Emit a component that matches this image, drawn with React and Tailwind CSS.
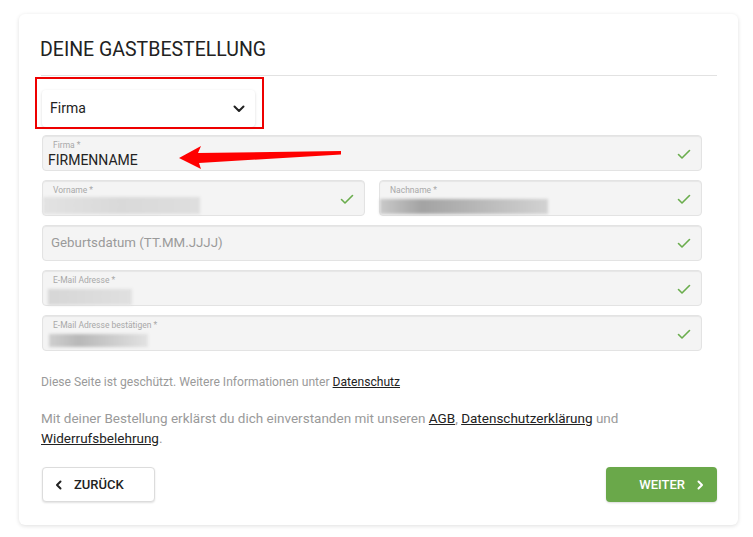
import React from "react";

const Check = () => (
  <svg width="14" height="11" viewBox="0 0 14 11" className="shrink-0">
    <polyline points="1.5,5.5 5,9 12.5,1.5" fill="none" stroke="#6aad4d" strokeWidth="1.6" strokeLinecap="round" strokeLinejoin="round" />
  </svg>
);

const fieldBase =
  "relative h-[36px] rounded-[4px] border border-[#e3e3e3] bg-[#f4f4f4] shadow-[inset_0_1px_1px_rgba(0,0,0,0.06)]";

function Blur({ className }) {
  return <div className={"blur-[1.5px] " + className} />;
}

function FilledField({ label, children, className = "" }) {
  return (
    <div className={fieldBase + " flex items-center " + className}>
      <div className="flex min-w-0 flex-1 flex-col self-stretch pt-[4px]">
        <div className="pl-[10px] text-[8.5px] leading-[11px] text-[#a8a8a8]">{label}</div>
        {children}
      </div>
      <div className="pr-[10px] pt-[2px]">
        <Check />
      </div>
    </div>
  );
}

export default function App() {
  return (
    <div className="relative min-h-[537px] w-[753px] bg-white font-['Roboto',sans-serif] text-[#222]">
      <div className="pl-[19px] pt-[14px]">
        <div className="w-[719px] rounded-[6px] bg-white px-[21px] pb-[23px] pl-[23px] pt-[23px] shadow-[0_1px_4px_rgba(0,0,0,0.13)]">
          <h1 className="-ml-[2px] text-[19.5px] font-normal leading-[26px] text-[#222]">
            DEINE GASTBESTELLUNG
          </h1>
          <div className="-ml-px mt-[12px] h-px bg-[#e2e2e2]" />

          <div className="mt-[14px] flex h-[37px] w-[213px] items-center justify-between rounded-[4px] bg-white px-[8px] shadow-[0_1px_3px_rgba(0,0,0,0.15)]">
            <span className="text-[14px] text-[#222]">Firma</span>
            <svg width="12" height="8" viewBox="0 0 12 8" className="mr-[2px]">
              <polyline points="1.5,1.5 6,6 10.5,1.5" fill="none" stroke="#222" strokeWidth="2" strokeLinecap="round" strokeLinejoin="round" />
            </svg>
          </div>

          <div className="mt-[8px] flex w-[660px] flex-col gap-[9px]">
            <FilledField label="Firma *">
              <div className="pl-[5px] pt-px text-[14px] leading-[16px] text-[#222]">FIRMENNAME</div>
            </FilledField>

            <div className="flex gap-[14px]">
              <FilledField label="Vorname *" className="h-[35px] w-[323px]">
                <Blur className="mt-px h-[17px] w-[157px] bg-gradient-to-r from-[#e2e2e2] via-[#d9d9d9] to-[#dedede]" />
              </FilledField>
              <FilledField label="Nachname *" className="h-[35px] flex-1">
                <Blur className="mt-[3px] h-[15px] w-[168px] bg-gradient-to-r from-[#c9c9c9] via-[#a3a3a3] via-25% to-[#d2d2d2]" />
              </FilledField>
            </div>

            <div className={fieldBase + " flex items-center"}>
              <span className="flex-1 pl-[8px] text-[13.3px] text-[#9a9a9a]">Geburtsdatum (TT.MM.JJJJ)</span>
              <div className="pr-[10px]">
                <Check />
              </div>
            </div>

            <FilledField label="E-Mail Adresse *" className="h-[35px]">
              <Blur className="ml-[5px] mt-[3px] h-[16px] w-[84px] bg-gradient-to-r from-[#d6d6d6] to-[#e0e0e0]" />
            </FilledField>

            <FilledField label="E-Mail Adresse bestätigen *" className="h-[35px]">
              <Blur className="ml-[6px] mt-[3px] h-[13px] w-[99px] bg-gradient-to-r from-[#cfcfcf] via-[#b8b8b8] via-30% to-[#e2e2e2]" />
            </FilledField>
          </div>

          <p className="-ml-px mt-[23px] text-[12.1px] leading-[16px] text-[#9a9a9a]">
            Diese Seite ist geschützt. Weitere Informationen unter{" "}
            <a className="text-[#222] underline">Datenschutz</a>
          </p>

          <p className="-ml-px mt-[18px] text-[13.5px] leading-[20px] text-[#9a9a9a]">
            Mit deiner Bestellung erklärst du dich einverstanden mit unseren{" "}
            <a className="text-[#222] underline">AGB</a>,{" "}
            <a className="text-[#222] underline">Datenschutzerklärung</a> und{" "}
            <a className="text-[#222] underline">Widerrufsbelehrung</a>.
          </p>

          <div className="mt-[19px] flex items-center justify-between">
            <button className="flex h-[35px] w-[113px] items-center gap-[11px] rounded-[4px] border border-[#dcdcdc] bg-white pl-[12px] text-[13px] font-medium text-[#222] shadow-[0_1px_2px_rgba(0,0,0,0.12)]">
              <svg width="8" height="10" viewBox="0 0 8 10">
                <polyline points="5.5,1.5 2,5 5.5,8.5" fill="none" stroke="#222" strokeWidth="2" strokeLinecap="round" strokeLinejoin="round" />
              </svg>
              ZURÜCK
            </button>
            <button className="flex h-[35px] w-[111px] items-center justify-end gap-[11px] rounded-[4px] bg-[#6aa84a] pr-[13px] text-[13px] font-medium text-white shadow-[0_1px_2px_rgba(0,0,0,0.15)]">
              WEITER
              <svg width="8" height="10" viewBox="0 0 8 10">
                <polyline points="2.5,1.5 6,5 2.5,8.5" fill="none" stroke="#fff" strokeWidth="2" strokeLinecap="round" strokeLinejoin="round" />
              </svg>
            </button>
          </div>
        </div>
      </div>

      {/* Annotation overlays */}
      <div className="pointer-events-none absolute left-[35px] top-[77px] h-[52px] w-[229px] border-2 border-[#ee0000]" />
      <svg className="pointer-events-none absolute left-0 top-0" width="753" height="537">
        <polygon points="179,158 201,146 198,153 341,151 341,154.5 199,163 201,169" fill="#ff0000" />
      </svg>
    </div>
  );
}
